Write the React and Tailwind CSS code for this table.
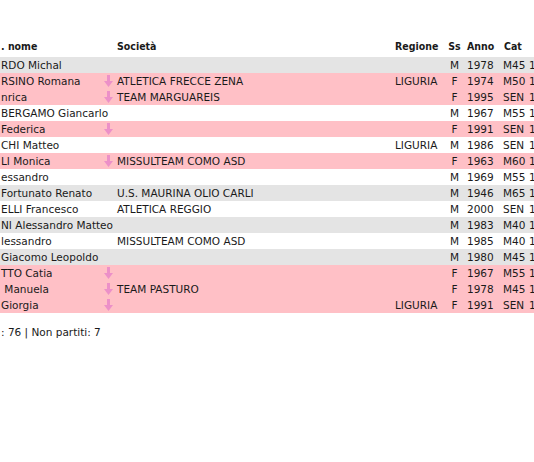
import React from 'react';

const rows = [
  { nome: 'RDO Michal', soc: '', reg: '', ss: 'M', anno: '1978', cat: 'M45' },
  { nome: 'RSINO Romana', soc: 'ATLETICA FRECCE ZENA', reg: 'LIGURIA', ss: 'F', anno: '1974', cat: 'M50' },
  { nome: 'nrica', soc: 'TEAM MARGUAREIS', reg: '', ss: 'F', anno: '1995', cat: 'SEN' },
  { nome: 'BERGAMO Giancarlo', soc: '', reg: '', ss: 'M', anno: '1967', cat: 'M55' },
  { nome: 'Federica', soc: '', reg: '', ss: 'F', anno: '1991', cat: 'SEN' },
  { nome: 'CHI Matteo', soc: '', reg: 'LIGURIA', ss: 'M', anno: '1986', cat: 'SEN' },
  { nome: 'LI Monica', soc: 'MISSULTEAM COMO ASD', reg: '', ss: 'F', anno: '1963', cat: 'M60' },
  { nome: 'essandro', soc: '', reg: '', ss: 'M', anno: '1969', cat: 'M55' },
  { nome: 'Fortunato Renato', soc: 'U.S. MAURINA OLIO CARLI', reg: '', ss: 'M', anno: '1946', cat: 'M65' },
  { nome: 'ELLI Francesco', soc: 'ATLETICA REGGIO', reg: '', ss: 'M', anno: '2000', cat: 'SEN' },
  { nome: 'NI Alessandro Matteo', soc: '', reg: '', ss: 'M', anno: '1983', cat: 'M40' },
  { nome: 'lessandro', soc: 'MISSULTEAM COMO ASD', reg: '', ss: 'M', anno: '1985', cat: 'M40' },
  { nome: 'Giacomo Leopoldo', soc: '', reg: '', ss: 'M', anno: '1980', cat: 'M45' },
  { nome: 'TTO Catia', soc: '', reg: '', ss: 'F', anno: '1967', cat: 'M55' },
  { nome: ' Manuela', soc: 'TEAM PASTURO', reg: '', ss: 'F', anno: '1978', cat: 'M45' },
  { nome: 'Giorgia', soc: '', reg: 'LIGURIA', ss: 'F', anno: '1991', cat: 'SEN' },
];

const cols = 'grid grid-cols-[104px_12px_277px_49px_25px_33px_27px_1fr]';

const FemaleArrow = () => (
  <svg width="9" height="13" viewBox="0 0 9 13" className="block">
    <rect x="3" y="0" width="3" height="7" fill="#ec90c8" />
    <path d="M0 6 H9 L4.5 12 Z" fill="#ec90c8" />
  </svg>
);

export default function App() {
  return (
    <div
      className="w-[534px] h-[462px] overflow-hidden bg-white text-[10.5px] text-[#1a1a1a]"
      style={{ fontFamily: '"DejaVu Sans", Verdana, sans-serif' }}
    >
      <div className="pt-[37px]">
        {/* Header */}
        <div
          className={`${cols} h-[20px] items-center font-bold`}
          style={{ fontFamily: '"DejaVu Sans Condensed", "DejaVu Sans", sans-serif' }}
        >
          <div className="pl-px whitespace-nowrap">. nome</div>
          <div />
          <div className="pl-px">Società</div>
          <div className="pl-[2px]">Regione</div>
          <div className="text-center">Ss</div>
          <div>Anno</div>
          <div className="pl-[4px]">Cat</div>
          <div />
        </div>

        {/* Rows */}
        {rows.map((r, i) => {
          const bg = r.ss === 'F' ? 'bg-[#ffc0c6]' : i % 2 === 0 ? 'bg-[#e4e4e4]' : 'bg-white';
          return (
            <div key={i} className={`${cols} h-[16px] items-center leading-[16px] ${bg}`}>
              <div className="pl-px whitespace-pre">{r.nome}</div>
              <div className="flex items-center">{r.ss === 'F' && <FemaleArrow />}</div>
              <div className="pl-px whitespace-nowrap">{r.soc}</div>
              <div className="pl-[2px]">{r.reg}</div>
              <div className="text-center">{r.ss}</div>
              <div>{r.anno}</div>
              <div className="pl-[3px]">{r.cat}</div>
              <div className="pl-[2px]">1</div>
            </div>
          );
        })}

        {/* Footer */}
        <div className="mt-[12px] pl-px">: 76 | Non partiti: 7</div>
      </div>
    </div>
  );
}
